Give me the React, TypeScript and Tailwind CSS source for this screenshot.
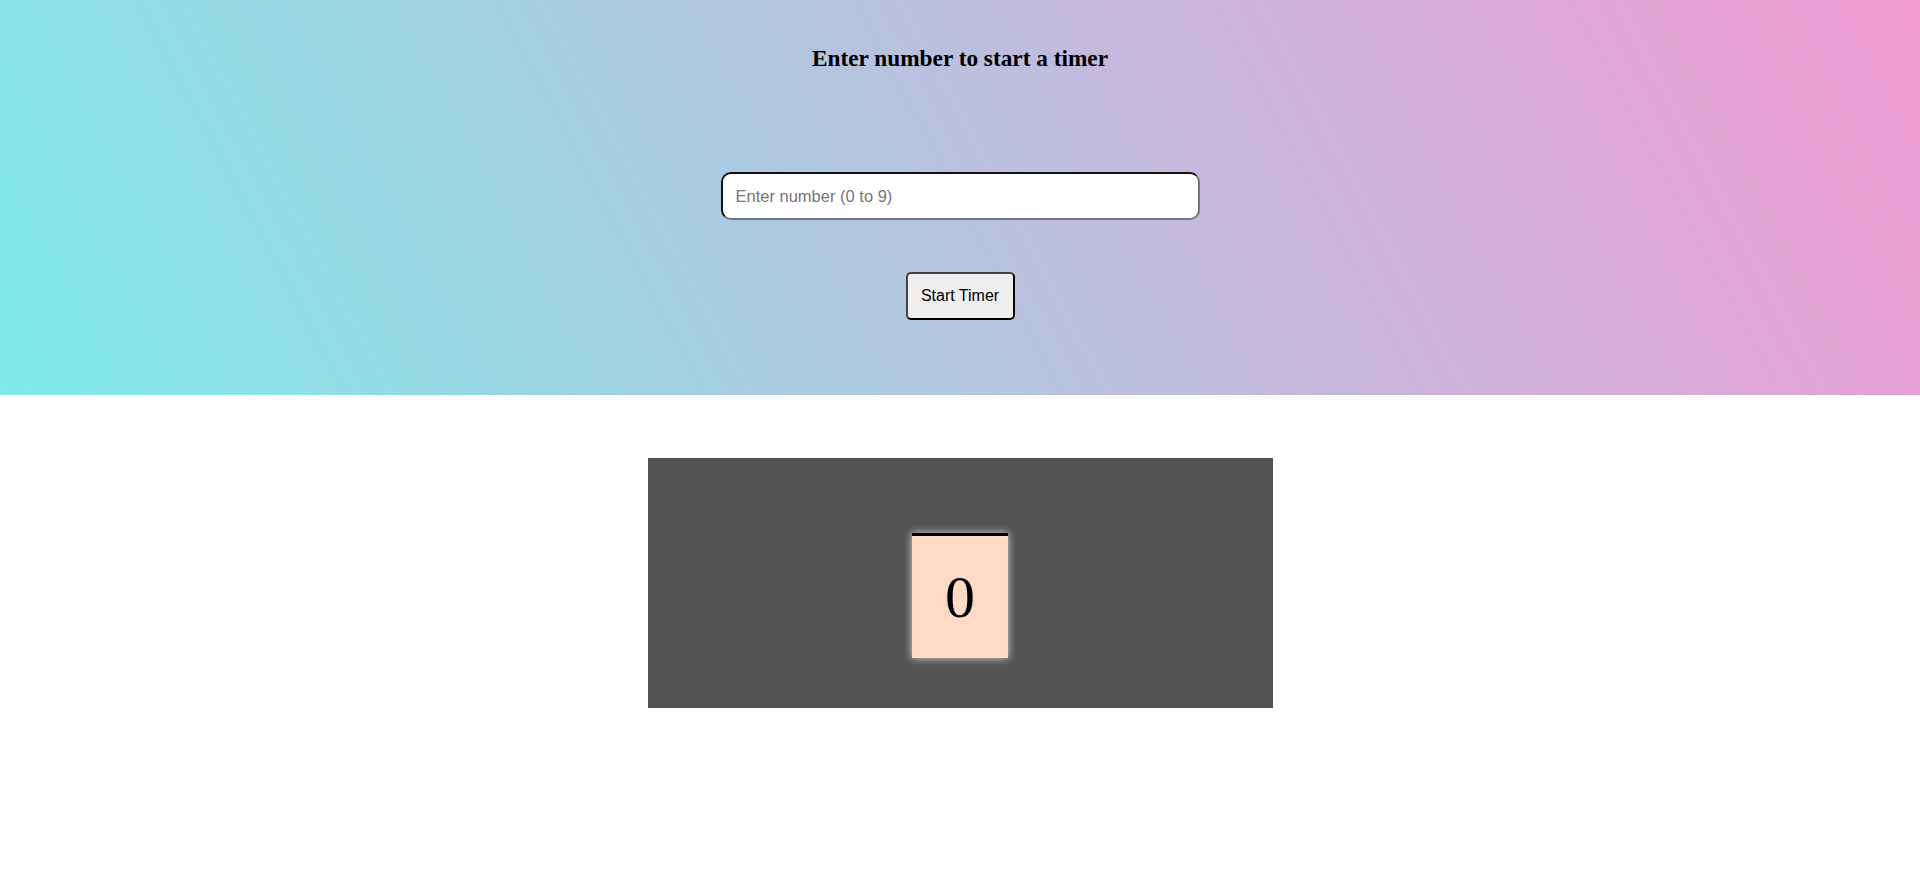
import React, { useState } from "react";

function App() {
  const [value, setValue] = useState<string>("");
  const [count, setCount] = useState<number>(0);

  return (
    <div className="min-h-[871px] bg-white">
      <div className="flex flex-col items-center bg-[linear-gradient(62deg,#7eeaea,#f29ad4)] pt-[45px] pb-[75px]">
        <h3 className="font-['Liberation_Serif',serif] text-[23.3px] leading-[26px] font-bold text-black">
          Enter number to start a timer
        </h3>
        <input
          type="text"
          value={value}
          onChange={(e) => setValue(e.target.value)}
          placeholder="Enter number (0 to 9)"
          className="mt-[101px] h-[48px] w-[479px] rounded-[10px] border-2 border-t-[#111] border-l-[#111] border-r-[#767676] border-b-[#767676] bg-white px-[13px] font-['Liberation_Sans',Arial,sans-serif] text-[16.5px] text-black outline-none placeholder:text-[#757575]"
        />
        <button
          onClick={() => setCount(Math.min(9, Math.max(0, parseInt(value) || 0)))}
          className="mt-[52px] h-[48px] w-[109px] rounded-[5px] border-2 border-t-[#444] border-l-[#444] border-r-black border-b-black bg-[#efefef] font-['Liberation_Sans',Arial,sans-serif] text-[16px] text-black"
        >
          Start Timer
        </button>
      </div>
      <div className="flex justify-center pt-[63px]">
        <div className="flex h-[250px] w-[625px] justify-center bg-[#535353] pt-[75px]">
          <div className="flex h-[125px] w-[96px] items-center justify-center border-t-[3px] border-black bg-[#ffdbc6] shadow-[0_0_8px_rgba(255,255,255,0.8)]">
            <span className="font-['Liberation_Serif',serif] text-[60px] leading-none text-black">
              {count}
            </span>
          </div>
        </div>
      </div>
    </div>
  );
}

export default App;
